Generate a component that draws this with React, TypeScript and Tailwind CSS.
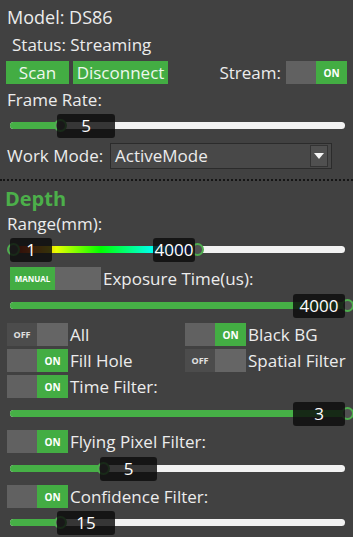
import React from "react";

function Toggle({ on, label }: { on: boolean; label?: string }) {
  return (
    <div className="flex h-[23px] w-[61px] shrink-0">
      {on ? (
        <>
          <div className="w-[30px] bg-[#616161]" />
          <div className="flex flex-1 items-center justify-center bg-[#43ad43] text-[10px] font-bold text-white">
            {label ?? "ON"}
          </div>
        </>
      ) : (
        <>
          <div className="flex w-[30px] items-center justify-center bg-[#4c4c4c] text-[9px] font-bold text-[#e0e0e0]">
            OFF
          </div>
          <div className="flex-1 bg-[#656565]" />
        </>
      )}
    </div>
  );
}

function Slider({
  thumb,
  boxLeft,
  boxWidth,
  value,
  full,
}: {
  thumb: number;
  boxLeft: number;
  boxWidth: number;
  value: string;
  full?: boolean;
}) {
  return (
    <div className="relative ml-[10px] h-[24px] w-[335px]">
      <div className="absolute left-0 right-0 top-[8px] h-[7px] rounded-full bg-[#f2f2f2]" />
      <div
        className="absolute left-0 top-[8px] h-[7px] rounded-full bg-[#46b046]"
        style={{ width: full ? "100%" : thumb + "px" }}
      />
      <div
        className="absolute top-[5px] h-[13px] w-[13px] rounded-full border-2 border-[#4fae4f] bg-[#505050]"
        style={{ left: thumb - 6 + "px" }}
      />
      <div
        className="absolute top-0 flex h-[24px] items-center justify-center rounded-[3px] bg-[rgba(12,12,12,0.82)] text-[17px] text-white"
        style={{ left: boxLeft + "px", width: boxWidth + "px" }}
      >
        {value}
      </div>
    </div>
  );
}

function RangeSlider() {
  return (
    <div className="relative ml-[10px] h-[24px] w-[335px]">
      <div className="absolute left-0 right-0 top-[8px] h-[7px] rounded-full bg-[#f2f2f2]" />
      <div
        className="absolute left-[2px] top-[8px] h-[7px] w-[185px]"
        style={{
          background:
            "linear-gradient(to right, #b00000 0%, #ff6000 10%, #e8ff00 24%, #00ff00 48%, #00ffff 78%, #0050ff 90%, #0010c0 100%)",
        }}
      />
      <div className="absolute left-[-3px] top-[5px] h-[13px] w-[13px] rounded-full border-2 border-[#4fae4f] bg-[#505050]" />
      <div className="absolute left-[181px] top-[5px] h-[13px] w-[13px] rounded-full border-2 border-[#4fae4f] bg-[#505050]" />
      <div className="absolute left-0 top-0 flex h-[24px] w-[42px] items-center justify-center rounded-[3px] bg-[rgba(12,12,12,0.82)] text-[17px] text-white">
        1
      </div>
      <div className="absolute left-[143px] top-0 flex h-[24px] w-[42px] items-center justify-center rounded-[3px] bg-[rgba(12,12,12,0.82)] text-[17px] text-white">
        4000
      </div>
    </div>
  );
}

export default function App() {
  return (
    <div
      className="h-[537px] w-[353px] overflow-hidden bg-[#414141] text-[17px] leading-[22px] text-[#ececec]"
      style={{ fontFamily: '"Open Sans", "Noto Sans", sans-serif' }}
    >
      <div className="pl-[7px] pt-[6px] text-[18px]">Model: DS86</div>
      <div className="pl-[12px] pt-[6px]">Status: Streaming</div>
      <div className="mt-[5px] flex h-[23px] items-center pl-[6px] pr-[6px]">
        <div className="flex h-[23px] w-[63px] items-center justify-center bg-[#43ad43] text-[#eef8ee]">Scan</div>
        <div className="ml-[4px] flex h-[23px] w-[95px] items-center justify-center bg-[#43ad43] text-[#eef8ee]">
          Disconnect
        </div>
        <div className="ml-auto mr-[5px]">Stream:</div>
        <Toggle on />
      </div>
      <div className="pl-[7px] pt-[5px]">Frame Rate:</div>
      <div className="mt-[3px]">
        <Slider thumb={50} boxLeft={47} boxWidth={58} value="5" />
      </div>
      <div className="mt-[5px] flex h-[26px] items-center pl-[7px]">
        <div className="w-[103px]">Work Mode:</div>
        <div className="flex h-[26px] w-[222px] items-center border border-[#2b2b2b] bg-[#484848] pl-[4px] pr-[3px]">
          <div className="flex-1">ActiveMode</div>
          <div className="flex h-[22px] w-[18px] items-center justify-center border border-[#333] bg-[#505050]">
            <svg width="10" height="6" viewBox="0 0 10 6">
              <path d="M0 0 L10 0 L5 6 Z" fill="#f5f5f5" />
            </svg>
          </div>
        </div>
      </div>
      <div className="mt-[10px] border-t-2 border-dotted border-[#151515]" />
      <div className="pl-[5px] pt-[6px] text-[20px] font-bold leading-[24px] text-[#4caf4a]">Depth</div>
      <div className="pl-[7px] pt-[2px]">Range(mm):</div>
      <div className="mt-[3px]">
        <RangeSlider />
      </div>
      <div className="mt-[5px] flex h-[23px] items-center pl-[10px]">
        <div className="flex h-[23px] w-[91px] shrink-0">
          <div className="flex w-[45px] items-center justify-center bg-[#43ad43] text-[8px] font-bold text-white">
            MANUAL
          </div>
          <div className="flex-1 bg-[#656565]" />
        </div>
        <div className="ml-[2px]">Exposure Time(us):</div>
      </div>
      <div className="mt-[4px]">
        <Slider thumb={337} boxLeft={283} boxWidth={52} value="4000" full />
      </div>
      <div className="mt-[5px] flex flex-col gap-[3px] pl-[7px]">
        <div className="flex h-[23px] items-center">
          <div className="flex w-[178px] items-center gap-[2px]">
            <Toggle on={false} />
            <span>All</span>
          </div>
          <div className="flex items-center gap-[2px]">
            <Toggle on />
            <span>Black BG</span>
          </div>
        </div>
        <div className="flex h-[23px] items-center">
          <div className="flex w-[178px] items-center gap-[2px]">
            <Toggle on />
            <span>Fill Hole</span>
          </div>
          <div className="flex items-center gap-[2px]">
            <Toggle on={false} />
            <span>Spatial Filter</span>
          </div>
        </div>
        <div className="flex h-[23px] items-center gap-[2px]">
          <Toggle on />
          <span>Time Filter:</span>
        </div>
      </div>
      <div className="mt-[4px]">
        <Slider thumb={337} boxLeft={283} boxWidth={52} value="3" full />
      </div>
      <div className="mt-[4px] flex h-[23px] items-center gap-[2px] pl-[7px]">
        <Toggle on />
        <span>Flying Pixel Filter:</span>
      </div>
      <div className="mt-[4px]">
        <Slider thumb={93} boxLeft={90} boxWidth={57} value="5" />
      </div>
      <div className="mt-[4px] flex h-[23px] items-center gap-[2px] pl-[7px]">
        <Toggle on />
        <span>Confidence Filter:</span>
      </div>
      <div className="mt-[3px]">
        <Slider thumb={50} boxLeft={47} boxWidth={58} value="15" />
      </div>
    </div>
  );
}
